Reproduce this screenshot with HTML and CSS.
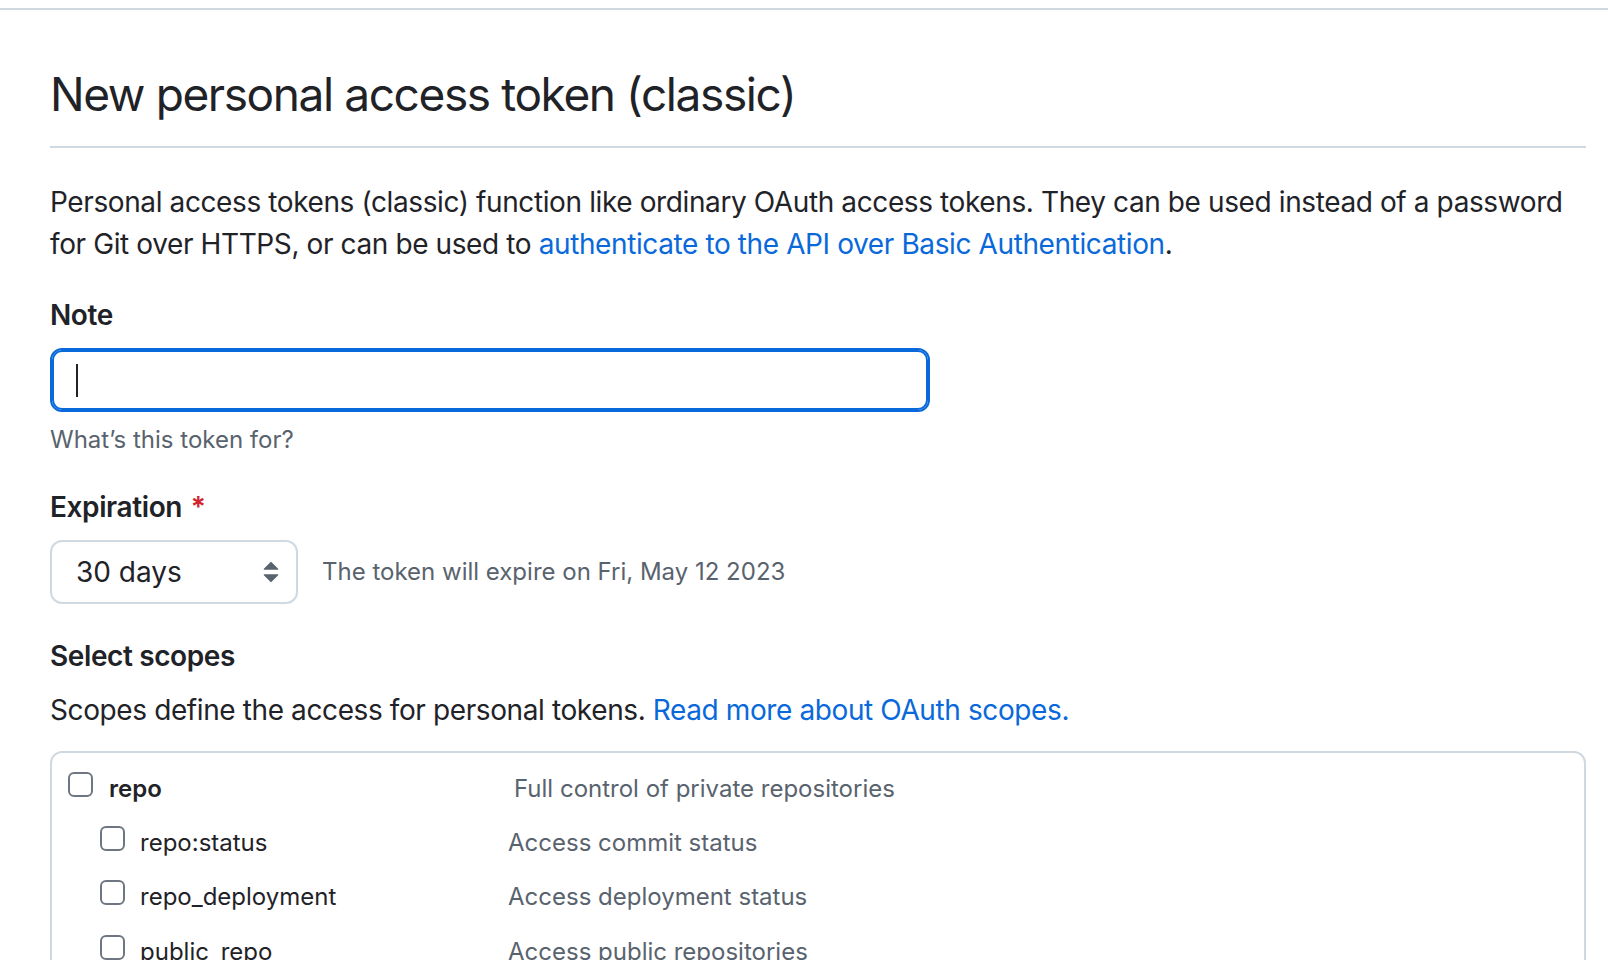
FILE: index.html
```html
<!DOCTYPE html>
<html lang="en">
<head>
<meta charset="utf-8">
<title>New personal access token (classic)</title>
<link rel="stylesheet" href="styles.css">
</head>
<body>
<div class="topbar"></div>
<main class="page">
  <div class="subhead">
    <h1 class="subhead-heading">New personal access token (classic)</h1>
  </div>
  <p class="lead">Personal access tokens (classic) function like ordinary OAuth access tokens. They can be used instead of a password for Git over HTTPS, or can be used to <a href="#" class="link">authenticate to the API over Basic Authentication</a>.</p>

  <div class="form-group">
    <label class="form-label" for="note">Note</label>
    <div class="input-wrap">
      <input id="note" class="form-control is-focused" type="text">
      <span class="caret"></span>
    </div>
    <p class="hint">What’s this token for?</p>
  </div>

  <div class="form-group expiration">
    <label class="form-label" for="expiry">Expiration <span class="required">*</span></label>
    <div class="select-row">
      <div class="select-wrap">
        <select id="expiry" class="form-select">
          <option>30 days</option>
          <option>7 days</option>
          <option>60 days</option>
          <option>90 days</option>
        </select>
        <svg class="select-icon" width="32" height="32" viewBox="0 0 16 16" aria-hidden="true"><path fill="#59636e" d="M4.427 9.573l3.396 3.396a.25.25 0 00.354 0l3.396-3.396a.25.25 0 00-.177-.427H4.604a.25.25 0 00-.177.427zM4.427 6.427l3.396-3.396a.25.25 0 01.354 0l3.396 3.396a.25.25 0 01-.177.427H4.604a.25.25 0 01-.177-.427z"/></svg>
      </div>
      <span class="expire-note">The token will expire on Fri, May 12 2023</span>
    </div>
  </div>

  <h3 class="scopes-title">Select scopes</h3>
  <p class="scopes-lead">Scopes define the access for personal tokens. <a href="#" class="link">Read more about OAuth scopes.</a></p>

  <div class="scopes-box">
    <div class="scope-row parent">
      <label class="scope-name"><input type="checkbox" class="cb"><strong>repo</strong></label>
      <span class="scope-desc">Full control of private repositories</span>
    </div>
    <div class="scope-row child">
      <label class="scope-name"><input type="checkbox" class="cb">repo:status</label>
      <span class="scope-desc">Access commit status</span>
    </div>
    <div class="scope-row child">
      <label class="scope-name"><input type="checkbox" class="cb">repo_deployment</label>
      <span class="scope-desc">Access deployment status</span>
    </div>
    <div class="scope-row child">
      <label class="scope-name"><input type="checkbox" class="cb">public_repo</label>
      <span class="scope-desc">Access public repositories</span>
    </div>
    <div class="scope-row child">
      <label class="scope-name"><input type="checkbox" class="cb">repo:invite</label>
      <span class="scope-desc">Access repository invitations</span>
    </div>
    <div class="scope-row child">
      <label class="scope-name"><input type="checkbox" class="cb">security_events</label>
      <span class="scope-desc">Read and write security events</span>
    </div>
  </div>
</main>
</body>
</html>
```
FILE: styles.css
```css
* { box-sizing: border-box; }

html, body {
  margin: 0;
  padding: 0;
  background: #ffffff;
}

body {
  font-family: "Inter", "Liberation Sans", sans-serif;
  font-size: 28px;
  line-height: 42px;
  letter-spacing: -0.014em;
  color: #1f2328;
}

.topbar {
  height: 10px;
  border-bottom: 2px solid #d1d9e0;
}

.page {
  padding: 48px 22px 0 50px;
}

.subhead {
  padding-bottom: 16px;
  border-bottom: 2px solid #d1d9e0;
}

.subhead-heading {
  margin: 0;
  font-size: 46px;
  line-height: 72px;
  font-weight: 400;
  letter-spacing: -1.4px;
}

.lead {
  margin: 33px 0 0;
}

.link {
  color: #0969da;
  text-decoration: none;
}

.form-group {
  margin-top: 29px;
}

.form-group.expiration {
  margin-top: 28px;
}

.form-label {
  display: block;
  font-weight: 600;
  margin-bottom: 12px;
}

.required {
  color: #d1242f;
  margin-left: 2px;
}

.input-wrap {
  position: relative;
  width: 880px;
}

.form-control {
  display: block;
  width: 880px;
  height: 64px;
  padding: 10px 24px;
  font: inherit;
  color: #1f2328;
  background: #ffffff;
  border: 2px solid #0969da;
  border-radius: 12px;
  box-shadow: inset 0 0 0 2px #0969da;
  outline: none;
  caret-color: transparent;
}

.caret {
  position: absolute;
  left: 26px;
  top: 16px;
  width: 2px;
  height: 33px;
  background: #1f2328;
}

.hint {
  margin: 10px 0 0;
  font-size: 24px;
  line-height: 36px;
  letter-spacing: 0;
  color: #59636e;
}

.select-row {
  display: flex;
  align-items: center;
  gap: 24px;
}

.select-wrap {
  position: relative;
  width: 248px;
  height: 64px;
}

.form-select {
  appearance: none;
  -webkit-appearance: none;
  display: block;
  width: 248px;
  height: 64px;
  padding: 0 48px 0 24px;
  font: inherit;
  color: #1f2328;
  background: #ffffff;
  border: 2px solid #d1d9e0;
  border-radius: 12px;
  outline: none;
}

.select-icon {
  position: absolute;
  right: 11px;
  top: 16px;
  pointer-events: none;
}

.expire-note {
  font-size: 24px;
  line-height: 36px;
  letter-spacing: 0;
  color: #59636e;
}

.scopes-title {
  margin: 31px 0 0;
  font-size: 28px;
  line-height: 42px;
  font-weight: 600;
}

.scopes-lead {
  margin: 12px 0 0;
}

.scopes-box {
  margin-top: 20px;
  padding: 9px 0 16px;
  border: 2px solid #d1d9e0;
  border-radius: 12px;
}

.scope-row {
  display: flex;
  align-items: baseline;
  font-size: 24px;
  letter-spacing: 0;
}

.scope-row.parent {
  padding-left: 16px;
}

.scope-row.child {
  padding-left: 48px;
}

.scope-name {
  display: block;
  line-height: 54.2px;
}

.parent .scope-name {
  width: 446px;
}

.child .scope-name {
  width: 408px;
}

.scope-name strong {
  font-weight: 600;
}

.cb {
  appearance: none;
  -webkit-appearance: none;
  width: 25px;
  height: 25px;
  margin: 0 16px 0 0;
  vertical-align: baseline;
  border: 2px solid #6e7781;
  border-radius: 6px;
  background: #ffffff;
}

.child .cb {
  margin-right: 15px;
}

.scope-desc {
  font-size: 24px;
  line-height: 36px;
  color: #59636e;
}
```
